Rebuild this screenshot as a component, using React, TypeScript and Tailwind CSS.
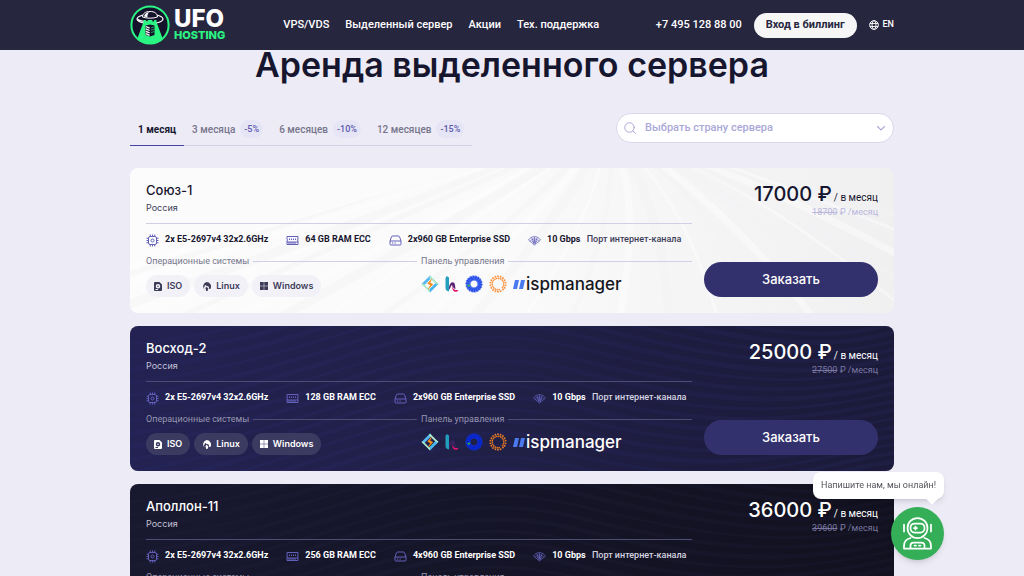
import React, { useState } from 'react';
import clsx from 'clsx';

type Theme = 'light' | 'indigo' | 'night';

interface Server {
  name: string;
  country: string;
  cpu: string;
  ram: string;
  disk: string;
  price: string;
  oldPrice: string;
  theme: Theme;
}

const servers: Server[] = [
  { name: 'Союз-1', country: 'Россия', cpu: '2x E5-2697v4 32x2.6GHz', ram: '64 GB RAM ECC', disk: '2x960 GB Enterprise SSD', price: '17000', oldPrice: '18700', theme: 'light' },
  { name: 'Восход-2', country: 'Россия', cpu: '2x E5-2697v4 32x2.6GHz', ram: '128 GB RAM ECC', disk: '2x960 GB Enterprise SSD', price: '25000', oldPrice: '27500', theme: 'indigo' },
  { name: 'Аполлон-11', country: 'Россия', cpu: '2x E5-2697v4 32x2.6GHz', ram: '256 GB RAM ECC', disk: '4x960 GB Enterprise SSD', price: '36000', oldPrice: '39600', theme: 'night' },
];

const periods = [
  { label: '1 месяц' },
  { label: '3 месяца', discount: '-5%' },
  { label: '6 месяцев', discount: '-10%' },
  { label: '12 месяцев', discount: '-15%' },
];

function UfoMark() {
  return (
    <svg viewBox="0 0 40 40" className="size-10 shrink-0" aria-hidden="true">
      <circle cx="20" cy="20" r="18.6" fill="#14132b" stroke="#2bf582" strokeWidth="2" />
      <path d="M13.500 17h13l6.500 17.500A19 19 0 0 1 20 39 19 19 0 0 1 7 34.500z" fill="#2bf582" />
      <ellipse cx="20" cy="14" rx="13" ry="4.600" fill="#14132b" stroke="#fff" strokeWidth="1.100" />
      <path d="M7.400 13.500c3 2.200 7 2.600 11 2.600-2 1.200-8 1-11-.8z" fill="#fff" />
      <path d="M12.500 12c.3-3.800 3-5.500 7.500-5.500s7.200 1.700 7.500 5.500c-4 1.600-11 1.600-15 0z" fill="#14132b" stroke="#fff" strokeWidth="1" />
      <path d="M14 11.500c.5-2.800 2.500-4 5.500-4.200-1.800 1.300-2.300 3-2 5z" fill="#fff" />
      <path d="M13.500 15h2.400v1.500h1.800V15h4.600v1.500h1.800V15h2.400v4.500h-13z" fill="#2bf582" />
      <path d="M15.500 20.500l4.500-1 4.500 1v9.500L20 31.500 15.500 30z" fill="#14132b" />
      <path d="M15.800 21.500l3.800 1.600M15.800 23.900l3.800 1.600M15.800 26.300l3.800 1.600M15.800 28.700l3.800 1.600" stroke="#fff" strokeWidth="1.300" />
      <path d="M21 23l3-1M21 25.300l3-1M21 27.600l3-1" stroke="#2bf582" strokeWidth=".6" />
    </svg>
  );
}

function GlobeIcon() {
  return (
    <svg viewBox="0 0 16 16" className="size-[10px]" fill="none" stroke="currentColor" strokeWidth="1.500" aria-hidden="true">
      <circle cx="8" cy="8" r="7" />
      <ellipse cx="8" cy="8" rx="3.200" ry="7" />
      <path d="M1.500 5.500h13M1.500 10.500h13" />
    </svg>
  );
}

function CpuIcon() {
  return (
    <svg viewBox="0 0 26 26" className="size-[13px] shrink-0" fill="none" stroke="currentColor" strokeWidth="2" aria-hidden="true">
      <rect x="5" y="5" width="16" height="16" rx="3" />
      <circle cx="13" cy="13" r="3" />
      <path d="M8.500 1v4M13 1v4M17.500 1v4M8.500 21v4M13 21v4M17.500 21v4M1 8.500h4M1 13h4M1 17.500h4M21 8.500h4M21 13h4M21 17.500h4" />
    </svg>
  );
}

function RamIcon() {
  return (
    <svg viewBox="0 0 26 26" className="size-[13px] shrink-0" fill="none" stroke="currentColor" strokeWidth="2" aria-hidden="true">
      <path d="M2 5h22v5l-1 2 1 2v7H2v-7l1-2-1-2z" />
      <path d="M2 16h22M6 16v5M10 16v5M14 16v5M18 16v5M7 9v3M11 9v3M15 9v3M19 9v3" />
    </svg>
  );
}

function DiskIcon() {
  return (
    <svg viewBox="0 0 26 26" className="size-[13px] shrink-0" fill="none" stroke="currentColor" strokeWidth="2" strokeLinejoin="round" aria-hidden="true">
      <path d="M2 14l3-8.500C5.500 4.300 6.300 4 7.500 4h11c1.200 0 2 .3 2.500 1.500L24 14v6.500c0 1-.8 1.500-1.500 1.500h-19C2.800 22 2 21.500 2 20.500z" />
      <path d="M2 14h22M6 18h2.500M11 18h2.500" />
    </svg>
  );
}

function NetIcon() {
  return (
    <svg viewBox="0 0 26 26" className="size-[13px] shrink-0" fill="none" stroke="currentColor" strokeWidth="1.500" strokeLinejoin="round" aria-hidden="true">
      <path d="M1 12C7 3 19 3 25 12l-3 2.500C18 8.500 8 8.500 4 14.500zM4 14.500l3 2.500c3-4.500 9-4.500 12 0l3-2.500M7 17l3 2c1.500-2 4.500-2 6 0l3-2M13 5.500v12M7.500 7l4 11M18.500 7l-4 11" />
      <circle cx="13" cy="20" r="2" />
    </svg>
  );
}

function IsoIcon() {
  return (
    <svg viewBox="0 0 16 18" className="h-[9px] w-2" aria-hidden="true">
      <path fillRule="evenodd" fill="currentColor" d="M2 0h9l5 5v11a2 2 0 0 1-2 2H2a2 2 0 0 1-2-2V2a2 2 0 0 1 2-2zm6 4a4.500 4.500 0 1 0 0 9 4.500 4.500 0 0 0 0-9zm0 3a1.500 1.500 0 1 1 0 3 1.500 1.500 0 0 1 0-3zM3 14v2h5v-2z" />
    </svg>
  );
}

function LinuxIcon() {
  return (
    <svg viewBox="0 0 18 18" className="size-[9px]" aria-hidden="true">
      <path fill="currentColor" d="M9 0a9 9 0 0 1 7.500 14l-3-.5.5-3-2-2.500-3 .5L8 6 5.500 7 5 9.500 3.500 12l2 3.500A9 9 0 0 1 9 0zM8 10l3 1 1.500 2.500L11 18H8.500L7 13z" />
    </svg>
  );
}

function WindowsIcon() {
  return (
    <svg viewBox="0 0 17 17" className="size-2" aria-hidden="true">
      <path fill="currentColor" d="M0 0h8v8H0zM9 0h8v8H9zM0 9h8v8H0zM9 9h8v8H9z" />
    </svg>
  );
}

// логотипы панелей управления
function PanelLogos({ dark }: { dark: boolean }) {
  const spokes = Array.from({ length: 18 }, (_, i) => i * 20);
  return (
    <div className="flex items-center gap-1.5">
      <svg viewBox="0 0 36 36" className="size-[18px]" aria-hidden="true">
        <path d="M18 1L1 18l4 4L18 9l3-5z" fill="#55b8f2" />
        <path d="M35 18L18 35l-4-4 14-14 3-3z" fill="#4bb5ee" />
        <path d="M18 1l17 17-4 1-15-14zM1 18l17 17v-5L5 17z" fill="#a9e6c8" />
        <path d="M20.500 9l-7 8 6 3-4.500 7.500 8.500-9-6-3z" fill="#ff9416" stroke="#f28a10" strokeWidth="1.500" />
      </svg>
      <svg viewBox="0 0 28 36" className="h-[18px] w-[14px]" aria-hidden="true">
        <path d="M3 2l5 3v28c-5-1-7-3-7-7V7z" fill="#239ebc" />
        <path d="M8 25c1-11 11-14 12-5l1 8c-4-1-6-4-7-8-2 1-3 6-6 10z" fill={dark ? '#3a2463' : '#5b2875'} />
        <path d="M14 22c2 7 7 9 13 8-4 7-13 4-13-8z" fill="#e5136d" />
      </svg>
      <svg viewBox="0 0 36 36" className="size-[18px]" aria-hidden="true">
        {spokes.map((angle) => (
          <path key={angle} transform={`rotate(${angle} 18 18)`} d="M15 1l4.500 1 2 8.500-3 .5-4-4z" fill={dark ? '#0723c9' : '#254be8'} stroke={dark ? '#1a3ad0' : '#7b96f8'} strokeWidth=".7" />
        ))}
        <path d="M1 18l5 3 5-3-3 6z" fill="#31d929" />
      </svg>
      <svg viewBox="0 0 36 36" className="size-[18px]" aria-hidden="true">
        {spokes.filter((angle) => angle !== 140).map((angle) => (
          <g key={angle} transform={`rotate(${angle} 18 18)`} fill={dark ? '#e77b23' : '#fb923c'}>
            <circle cx="18" cy="2.600" r="1.900" />
            <circle cx="19.600" cy="6.600" r="1.700" />
          </g>
        ))}
        <circle cx="28" cy="29" r="2" fill={dark ? '#e77b23' : '#fb923c'} />
      </svg>
      <div className="flex items-center gap-px">
        <svg viewBox="0 0 24 18" className="h-[9px] w-3" aria-hidden="true">
          <path d="M4 0h8L8 18H0zM16 0h8l-4 18h-8z" fill="#4b7af0" />
        </svg>
        <span className={clsx('text-[17px] leading-[22px] font-medium', dark ? 'text-white' : 'text-[#16161d]')}>ispmanager</span>
      </div>
    </div>
  );
}

// лучи на фоне карточки
function CardRays({ theme }: { theme: Theme }) {
  const rays = Array.from({ length: 26 }, (_, i) => i);
  return (
    <svg viewBox="0 0 764 145" preserveAspectRatio="none" className="absolute inset-0 size-full" fill="none" aria-hidden="true">
      {theme === 'light'
        ? rays.map((i) => (
            <path key={i} d={`M${400 + i * 6} -20Q${180 + i * 24} ${50 - (i % 3) * 8} ${-330 + i * 58} 190`} stroke={i % 2 ? '#f3f3f4' : '#ffffff'} strokeWidth={3 + (i % 4) * 2} opacity=".4" />
          ))
        : rays.map((i) => (
            <path key={i} d={`M-20 ${20 + i * 13}C220 ${i * 11} 290 ${-90 + i * 12} 450 ${-50 + i * 12}S690 ${20 + i * 7} 790 ${-20 + i * 9}`} stroke={theme === 'indigo' ? '#34347c' : '#29294d'} strokeWidth={3 + (i % 3)} opacity=".14" />
          ))}
    </svg>
  );
}

function Spec({ icon, children }: { icon: React.ReactNode; children: React.ReactNode }) {
  return (
    <li className="flex items-center gap-1.5">
      {icon}
      <span>{children}</span>
    </li>
  );
}

function ServerCard({ server }: { server: Server }) {
  const dark = server.theme !== 'light';
  const line = dark ? 'bg-[#4d4c72]' : 'bg-[#cfcfe6]';
  const muted = dark ? 'text-[#9796ae]' : 'text-[#77768c]';
  const sectionTitle = clsx("flex items-center gap-1 font-['Roboto',sans-serif] text-[9px] leading-3", muted);
  const osPill = clsx(
    'flex h-[22px] items-center gap-[5px] rounded-full px-2 text-[9px] font-semibold',
    dark ? 'bg-[#3b3a60] text-white' : 'bg-[#f2f1f8] text-[#3d3c58]'
  );

  return (
    <article
      className={clsx(
        'relative overflow-hidden rounded-lg',
        server.theme === 'light' && 'bg-linear-to-r from-[#fcfcfc] via-[#fafafa] to-[#f0f0f1] text-[#17162f]',
        server.theme === 'indigo' && 'bg-linear-to-r from-[#232252] via-[#201f45] to-[#1b1a39] text-white',
        server.theme === 'night' && 'bg-linear-to-r from-[#18182f] to-[#12111f] text-white'
      )}
    >
      <CardRays theme={server.theme} />
      <div className="relative flex gap-3 px-4 pt-3.5 pb-4">
        <div className="min-w-0 flex-1">
          <h2 className="text-[13px] leading-4 font-medium">{server.name}</h2>
          <p className={clsx('mt-1 text-[9px] leading-3', dark ? 'text-[#c3c2d2]' : 'text-[#3d3c58]')}>{server.country}</p>
          <div className={clsx('mt-[9px] h-px', line)} />
          <ul className="mt-2 flex h-4 items-center gap-[18px] font-['Roboto',sans-serif] text-[9px] font-bold whitespace-nowrap [&_svg]:text-[#6360bb]">
            <Spec icon={<CpuIcon />}>{server.cpu}</Spec>
            <Spec icon={<RamIcon />}>{server.ram}</Spec>
            <Spec icon={<DiskIcon />}>{server.disk}</Spec>
            <Spec icon={<NetIcon />}>
              10 Gbps <span className={clsx('ml-1 font-medium', dark ? 'text-[#d5d4e0]' : 'text-[#3d3c58]')}>Порт интернет-канала</span>
            </Spec>
          </ul>
          <div className="mt-[7px] grid grid-cols-2 gap-1">
            <section>
              <h3 className={sectionTitle}>
                Операционные системы
                <span className={clsx('h-px flex-1', line)} />
              </h3>
              <div className="mt-2 flex gap-1">
                <span className={osPill}><IsoIcon />ISO</span>
                <span className={osPill}><LinuxIcon />Linux</span>
                <span className={osPill}><WindowsIcon />Windows</span>
              </div>
            </section>
            <section>
              <h3 className={sectionTitle}>
                Панель управления
                <span className={clsx('h-px flex-1', line)} />
              </h3>
              <div className="mt-1.5">
                <PanelLogos dark={dark} />
              </div>
            </section>
          </div>
        </div>
        <div className="flex w-[174px] flex-col justify-between text-right">
          <div className="whitespace-nowrap">
            <p className="flex h-6 items-baseline justify-end gap-0.5 font-['Roboto',sans-serif] text-[10px] leading-6">
              <span className="font-['Inter',sans-serif] text-[20px] font-medium">{server.price} ₽</span>
              <span>/ в месяц</span>
            </p>
            <p className={clsx("font-['Roboto',sans-serif] text-[9px] leading-3", dark ? 'text-[#7977a0]' : 'text-[#b9b7dc]')}>
              <s>{server.oldPrice}</s> ₽ /месяц
            </p>
          </div>
          <button type="button" className="h-[35px] rounded-full bg-[#33316d] text-[13px] font-medium text-white">
            Заказать
          </button>
        </div>
      </div>
    </article>
  );
}

function Header() {
  return (
    <header className="fixed inset-x-0 top-0 z-10 bg-[#27263f] text-white">
      <div className="mx-auto flex h-[50px] w-full max-w-[764px] items-center font-['Roboto',sans-serif] text-[11px] font-medium">
        <a href="#" className="flex items-center gap-1" aria-label="UFO Hosting">
          <UfoMark />
          <span className="flex flex-col font-['Inter',sans-serif] font-extrabold">
            <span className="text-[24px] leading-[20px]">UFO</span>
            <span className="text-[11px] leading-3 text-[#2bf582]">HOSTING</span>
          </span>
        </a>
        <nav className="ml-[58px] flex gap-4 whitespace-nowrap">
          <a href="#">VPS/VDS</a>
          <a href="#">Выделенный сервер</a>
          <a href="#">Акции</a>
          <a href="#">Тех. поддержка</a>
        </nav>
        <div className="ml-auto flex items-center gap-3 whitespace-nowrap">
          <a href="tel:+74951288800">+7 495 128 88 00</a>
          <button type="button" className="h-[25px] rounded-full bg-[#f6f6f7] px-3 font-bold text-[#27263f]">
            Вход в биллинг
          </button>
          <a href="#" className="flex items-center gap-1 text-[9px]">
            <GlobeIcon />
            EN
          </a>
        </div>
      </div>
    </header>
  );
}

function ChatWidget() {
  return (
    <aside className="fixed right-20 bottom-4 z-20 flex flex-col items-end">
      <div className="relative mb-2 rounded-lg bg-white px-2 py-1.5 font-['Roboto',sans-serif] text-[9px] leading-[15px] text-[#55555c] shadow-md">
        Напишите нам, мы онлайн!
        <span className="absolute right-2 -bottom-1 size-2 rotate-45 bg-white" />
      </div>
      <button type="button" aria-label="Открыть чат" className="flex size-[53px] items-center justify-center rounded-full bg-[#34ae57] text-white shadow-md">
        <svg viewBox="0 0 58 66" className="h-[33px] w-[29px]" fill="none" stroke="currentColor" strokeWidth="3.500" strokeLinecap="round" strokeLinejoin="round" aria-hidden="true">
          <circle cx="29" cy="22" r="20" />
          <rect x="15" y="13" width="28" height="18" rx="8" />
          <path d="M22 22h6M25 19v6M2 15v14M56 15v14" />
          <path d="M15 42C6 44 2 50 2 58v5h54v-5c0-8-4-14-13-16M15 62v-5c0-4 2-6 6-6h16c4 0 6 2 6 6v5M23 57h3M32 57h3" />
        </svg>
      </button>
    </aside>
  );
}

export default function App() {
  const [period, setPeriod] = useState(0);

  return (
    <div className="min-h-screen bg-[#ecebf6] font-['Inter','Noto_Sans',sans-serif] text-[#17162f]">
      <Header />
      <main className="mx-auto w-full max-w-[764px] pt-[43px] pb-8">
        <h1 className="text-center text-[34px] leading-[44px] font-semibold">Аренда выделенного сервера</h1>

        <div className="mt-[26px] flex items-start justify-between">
          <div role="tablist" className="flex border-b border-[#d2d1e5] font-['Roboto',sans-serif]">
            {periods.map((item, i) => (
              <button
                key={item.label}
                type="button"
                role="tab"
                aria-selected={period === i}
                onClick={() => setPeriod(i)}
                className={clsx(
                  '-mb-px flex h-[33px] items-center gap-[5px] border-b px-2 text-[10px] whitespace-nowrap',
                  period === i ? 'border-[#4643a0] font-bold text-[#17162f]' : 'border-transparent font-medium text-[#77768c]'
                )}
              >
                {item.label}
                {item.discount && (
                  <span className="rounded-full bg-[#e6e5f5] px-1 py-0.5 text-[9px] leading-[14px] text-[#5c59b0]">{item.discount}</span>
                )}
              </button>
            ))}
          </div>
          <div className="relative w-[278px]">
            <select
              aria-label="Страна сервера"
              defaultValue=""
              className="h-[30px] w-full appearance-none rounded-full border border-[#d9d8ee] bg-white pl-7 font-['Roboto',sans-serif] text-[11px] font-medium text-[#aaa8d8]"
            >
              <option value="">Выбрать страну сервера</option>
              <option value="ru">Россия</option>
            </select>
            <svg viewBox="0 0 24 24" className="pointer-events-none absolute top-[9px] left-2 size-3 text-[#aaa8d8]" fill="none" stroke="currentColor" strokeWidth="2" strokeLinecap="round" aria-hidden="true">
              <circle cx="11" cy="11" r="9.500" />
              <path d="M18 18l5 5" />
            </svg>
            <svg viewBox="0 0 16 16" className="pointer-events-none absolute top-[11px] right-[9px] size-2 text-[#aaa8d8]" fill="none" stroke="currentColor" strokeWidth="2.200" strokeLinecap="round" aria-hidden="true">
              <path d="M1 5l7 7 7-7" />
            </svg>
          </div>
        </div>

        <div className="mt-[22px] flex flex-col gap-[13px]">
          {servers.map((server) => (
            <ServerCard key={server.name} server={server} />
          ))}
        </div>
      </main>
      <ChatWidget />
    </div>
  );
}
